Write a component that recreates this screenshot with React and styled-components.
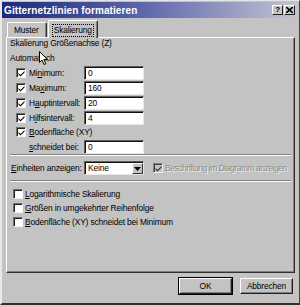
import React from "react";
import styled, { createGlobalStyle } from "styled-components";

const GlobalStyle = createGlobalStyle`
  html, body {
    margin: 0;
    padding: 0;
    background: #c3c3c3;
  }
  * {
    box-sizing: border-box;
  }
`;

const FONT = `"Liberation Sans", Arial, sans-serif`;

const CheckIcon = () => (
  <svg width="7" height="7" viewBox="0 0 7 7">
    <path d="M0.5 3 L2.5 5 L6.5 1 L6.5 2.6 L2.5 6.6 L0.5 4.6 Z" fill="#000" />
  </svg>
);

const Check = ({ checked, disabled }) => (
  <StyledCheck disabled={disabled}>{checked && <CheckIcon />}</StyledCheck>
);

const Pointer = () => (
  <StyledPointer width="10" height="15" viewBox="0 0 10 15">
    <path
      d="M0.5 0.5 L0.5 11.5 L3 9 L5 13.5 L6.8 12.7 L4.9 8.4 L8.3 8.4 Z"
      fill="#fff"
      stroke="#000"
      strokeWidth="1"
      strokeLinejoin="miter"
    />
  </StyledPointer>
);

const Gitternetz = () => {
  const rows = [
    { label: <>Mi<u>n</u>imum:</>, value: "0" },
    { label: <>Ma<u>x</u>imum:</>, value: "160" },
    { label: <>H<u>a</u>uptintervall:</>, value: "20" },
    { label: <>H<u>i</u>lfsintervall:</>, value: "4" },
  ];

  return (
    <Window>
      <TitleBar>
        <Title>Gitternetzlinien formatieren</Title>
        <Caps>
          <CapButton>?</CapButton>
          <CapButton>
            <svg width="7" height="6" viewBox="0 0 7 6">
              <path d="M0 0 L7 6 M7 0 L0 6" stroke="#000" strokeWidth="1.6" />
            </svg>
          </CapButton>
        </Caps>
      </TitleBar>

      <Body>
        <TabStrip>
          <Tab>Muster</Tab>
          <Tab active>
            <Focus>Skalierung</Focus>
          </Tab>
        </TabStrip>

        <Panel>
          <Pointer />
          <GroupTitle>Skalierung Größenachse (Z)</GroupTitle>
          <Caption>Automatisch</Caption>

          <Fields>
            {rows.map((r, i) => (
              <FieldRow key={i}>
                <Check checked />
                <FieldLabel>{r.label}</FieldLabel>
                <TextBox>{r.value}</TextBox>
              </FieldRow>
            ))}
            <FieldRow short>
              <Check checked />
              <FieldLabel>
                <u>B</u>odenfläche (XY)
              </FieldLabel>
            </FieldRow>
            <FieldRow>
              <Spacer />
              <FieldLabel>
                <u>s</u>chneidet bei:
              </FieldLabel>
              <TextBox>0</TextBox>
            </FieldRow>
          </Fields>

          <Separator />

          <UnitsRow>
            <UnitsLabel>
              <u>E</u>inheiten anzeigen:
            </UnitsLabel>
            <Select>
              <SelectText>Keine</SelectText>
              <SelectArrow>
                <svg width="7" height="4" viewBox="0 0 7 4">
                  <path d="M0 0 L7 0 L3.5 4 Z" fill="#000" />
                </svg>
              </SelectArrow>
            </Select>
            <DisabledOption>
              <Check checked disabled />
              <DisabledText>Beschriftung im Diagramm anzeigen</DisabledText>
            </DisabledOption>
          </UnitsRow>

          <Separator />

          <Options>
            <OptionRow>
              <Check />
              <span>
                <u>L</u>ogarithmische Skalierung
              </span>
            </OptionRow>
            <OptionRow>
              <Check />
              <span>
                <u>G</u>rößen in umgekehrter Reihenfolge
              </span>
            </OptionRow>
            <OptionRow>
              <Check />
              <span>
                <u>B</u>odenfläche (XY) schneidet bei Minimum
              </span>
            </OptionRow>
          </Options>
        </Panel>

        <ButtonRow>
          <PushButton isDefault>OK</PushButton>
          <PushButton>Abbrechen</PushButton>
        </ButtonRow>
      </Body>
    </Window>
  );
};

const Window = styled.div`
  width: 300px;
  height: 305px;
  background: #c3c3c3;
  border-top: 1px solid #e4e4e4;
  border-left: 2px solid #e8e8e8;
  border-right: 1px solid #404040;
  border-bottom: 2px solid #303030;
  font-family: ${FONT};
  font-size: 8.4px;
  letter-spacing: -0.15px;
  color: #000;
  display: flex;
  flex-direction: column;
  overflow: hidden;
`;

const TitleBar = styled.div`
  height: 16px;
  margin: 1px 1px 0 0;
  background: linear-gradient(to right, #1c2a7c 0%, #5a62a8 45%, #c2c4d6 100%);
  display: flex;
  align-items: center;
  justify-content: space-between;
  padding: 0 3px 0 2px;
`;

const Title = styled.div`
  color: #fff;
  font-weight: bold;
  font-size: 10px;
  letter-spacing: 0.1px;
`;

const Caps = styled.div`
  display: flex;
  gap: 1px;
`;

const CapButton = styled.div`
  width: 11px;
  height: 10px;
  background: #c6c6c6;
  border-top: 1px solid #fff;
  border-left: 1px solid #fff;
  border-right: 1px solid #202020;
  border-bottom: 1px solid #202020;
  display: flex;
  align-items: center;
  justify-content: center;
  font-weight: bold;
  font-size: 8px;
  line-height: 1;
`;

const Body = styled.div`
  flex: 1;
  display: flex;
  flex-direction: column;
  padding: 1px 4px 0 4px;
`;

const TabStrip = styled.div`
  height: 18px;
  display: flex;
  align-items: flex-end;
  padding-left: 1px;
  position: relative;
  z-index: 1;
`;

const Tab = styled.div`
  height: ${(p) => (p.active ? "18px" : "15px")};
  margin-bottom: ${(p) => (p.active ? "-1px" : "0")};
  margin-left: ${(p) => (p.active ? "1px" : "0")};
  padding: ${(p) => (p.active ? "1px 4px 0" : "2px 7px 0 6px")};
  background: #c3c3c3;
  border-top: 1px solid #fff;
  border-left: 1px solid #fff;
  border-right: 1px solid #303030;
  border-radius: 2px 2px 0 0;
  display: flex;
  align-items: ${(p) => (p.active ? "center" : "flex-start")};
  box-shadow: inset -1px 0 0 #808080;
`;

const Focus = styled.span`
  outline: 1px dotted #000;
  padding: 0 1px;
  line-height: 11px;
`;

const Panel = styled.div`
  position: relative;
  height: 236px;
  width: 289px;
  background: #c3c3c3;
  border-top: 1px solid #fff;
  border-left: 1px solid #fff;
  border-right: 1px solid #303030;
  border-bottom: 1px solid #303030;
  box-shadow: inset -1px -1px 0 #808080;
  padding: 0 3px 0 3px;
  display: flex;
  flex-direction: column;
`;

const StyledPointer = styled.svg`
  position: absolute;
  left: 32px;
  top: 13px;
`;

const GroupTitle = styled.div`
  line-height: 11px;
`;

const Caption = styled.div`
  line-height: 11px;
  margin-top: 4px;
`;

const Fields = styled.div`
  display: flex;
  flex-direction: column;
  margin-top: 1px;
  padding-left: 6px;
`;

const FieldRow = styled.div`
  display: flex;
  align-items: center;
  height: ${(p) => (p.short ? "14px" : "15px")};
`;

const StyledCheck = styled.span`
  flex: none;
  width: 10px;
  height: 10px;
  background: ${(p) => (p.disabled ? "#c3c3c3" : "#fff")};
  border-top: 1px solid #707070;
  border-left: 1px solid #707070;
  border-right: 1px solid #f4f4f4;
  border-bottom: 1px solid #f4f4f4;
  box-shadow: inset 1px 1px 0 #202020;
  display: flex;
  align-items: center;
  justify-content: center;
  padding: 1px 0 0 1px;
  opacity: ${(p) => (p.disabled ? 0.8 : 1)};
`;

const Spacer = styled.span`
  width: 10px;
  flex: none;
`;

const FieldLabel = styled.span`
  margin-left: 3px;
  width: 55px;
  white-space: nowrap;
`;

const TextBox = styled.div`
  width: 60px;
  height: 14px;
  background: #fff;
  border-top: 1px solid #606060;
  border-left: 1px solid #606060;
  border-right: 1px solid #e8e8e8;
  border-bottom: 1px solid #e8e8e8;
  box-shadow: inset 1px 1px 0 #101010;
  padding: 1px 0 0 3px;
  line-height: 11px;
`;

const Separator = styled.div`
  height: 2px;
  border-top: 1px solid #808080;
  border-bottom: 1px solid #fff;
`;

const UnitsRow = styled.div`
  display: flex;
  align-items: center;
  height: 24px;
`;

const UnitsLabel = styled.span`
  width: 74px;
  padding-left: 1px;
  white-space: nowrap;
`;

const Select = styled.div`
  width: 60px;
  height: 14px;
  background: #fff;
  border-top: 1px solid #606060;
  border-left: 1px solid #606060;
  border-right: 1px solid #e8e8e8;
  border-bottom: 1px solid #e8e8e8;
  box-shadow: inset 1px 1px 0 #101010;
  display: flex;
  align-items: stretch;
  padding: 1px 0 0 1px;
`;

const SelectText = styled.span`
  flex: 1;
  padding-left: 2px;
  line-height: 11px;
`;

const SelectArrow = styled.span`
  width: 11px;
  background: #c3c3c3;
  border-top: 1px solid #fff;
  border-left: 1px solid #fff;
  border-right: 1px solid #303030;
  border-bottom: 1px solid #303030;
  display: flex;
  align-items: center;
  justify-content: center;
`;

const DisabledOption = styled.div`
  display: flex;
  align-items: center;
  margin-left: 9px;
  gap: 2px;
`;

const DisabledText = styled.span`
  color: #8a8a8a;
  text-shadow: 1px 1px 0 #f0f0f0;
  letter-spacing: -0.4px;
  white-space: nowrap;
`;

const Options = styled.div`
  display: flex;
  flex-direction: column;
  padding-top: 5px;
  padding-left: 3px;
`;

const OptionRow = styled.div`
  display: flex;
  align-items: center;
  gap: 2px;
  height: 14px;
  white-space: nowrap;
`;

const ButtonRow = styled.div`
  display: flex;
  justify-content: flex-end;
  gap: 8px;
  padding: 5px 2px 0 0;
`;

const PushButton = styled.div`
  width: 53px;
  height: 16px;
  display: flex;
  align-items: center;
  justify-content: center;
  background: #c3c3c3;
  border-top: 1px solid #fff;
  border-left: 1px solid #fff;
  border-right: 1px solid #202020;
  border-bottom: 1px solid #202020;
  box-shadow: ${(p) =>
    p.isDefault
      ? "0 0 0 1px #000, inset -1px -1px 0 #808080"
      : "inset -1px -1px 0 #808080"};
`;

const App = () => (
  <>
    <GlobalStyle />
    <Gitternetz />
  </>
);

export default App;
